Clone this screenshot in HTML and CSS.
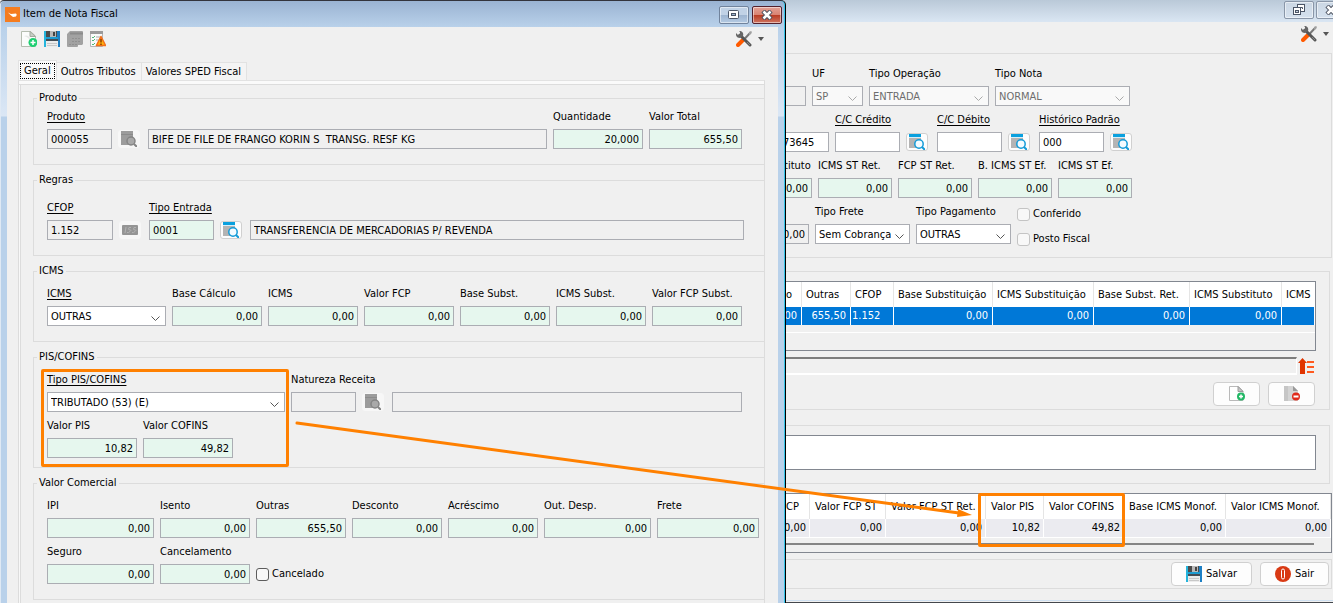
FILE: index.html
```html
<!DOCTYPE html>
<html lang="pt-BR">
<head>
    <meta charset="UTF-8">
    <meta name="viewport" content="width=device-width, initial-scale=1.0">
    <title>Item de Nota Fiscal</title>
    <link rel="stylesheet" href="styles.css">
</head>
<body>
    <svg class="sprite" aria-hidden="true">
        <symbol id="i-new" viewBox="0 0 16 16">
            <path d="M.5.5h9l5 4.500v10.500H.5z" fill="#fbfcfb" stroke="#b5bdb0"/>
            <path d="M9 .5v5h5.500z" fill="#c9cec6" stroke="#a2a99e"/>
            <path d="M3 5c2-1 4-1 6 2v3c-1-3-3-4-6-5z" fill="#e6e8e6"/>
            <circle cx="12" cy="11.500" r="4.500" fill="#1fcf72"/>
            <path d="M12 9v5M9.500 11.500h5" stroke="#fff" stroke-width="1.500"/>
        </symbol>
        <symbol id="i-add" viewBox="0 0 16 16">
            <path d="M.5.5h9l4.500 4.500v9.500H.5z" fill="#fff" stroke="#b9b9b9"/>
            <path d="M9 .5v5h5z" fill="#c4c4c4" stroke="#9a9a9a"/>
            <circle cx="12" cy="10.500" r="4" fill="#23b866"/>
            <path d="M12 8.500v4M10 10.500h4" stroke="#fff" stroke-width="1.500"/>
        </symbol>
        <symbol id="i-remove" viewBox="0 0 16 16">
            <path d="M0 0h9l5 5v10H0z" fill="#c6c6c6"/>
            <path d="M4 0h5l5 5v10H4z" fill="#d4d4d4"/>
            <path d="M9 0v5h5z" fill="#999"/>
            <circle cx="12" cy="10.500" r="4" fill="#e02a1b"/>
            <path d="M9.500 10.500h5" stroke="#fff" stroke-width="2"/>
        </symbol>
        <symbol id="i-save" viewBox="0 0 16 16">
            <path d="M0 0h16v16H0z" fill="#1d7fc4"/>
            <path d="M0 0h2v16H0z" fill="#25b5dc"/>
            <path d="M2 0h11v6H2z" fill="#4c4c4c"/>
            <path d="M6 0h6v6H6z" fill="#b9b9b9"/>
            <path d="M9 1h2v4H9z" fill="#444"/>
            <path d="M2 6h12v2H2z" fill="#1d9bd0"/>
            <path d="M2 8h12v2H2z" fill="#454d55"/>
            <path d="M2 10h12v6H2z" fill="#ececec"/>
            <path d="M3 12.500h10M3 14.500h10" stroke="#c8c8c8"/>
        </symbol>
        <symbol id="i-calc" viewBox="0 0 16 16">
            <path d="M3 0h12q1 0 1 1v12l-1 1h-4v1q0 1-1 1H1q-1 0-1-1V3z" fill="#a2a2a2"/>
            <path d="M3 2.500h13" stroke="#8b8b8b" stroke-width="2"/>
            <path d="M5 7.500h9M5 10.500h9M2 13.500h8" stroke="#909090" stroke-dasharray="2 1"/>
        </symbol>
        <symbol id="i-warn" viewBox="0 0 16 16">
            <path d="M.5.5h12v15H.5z" fill="#fafafa" stroke="#b5b5b5"/>
            <path d="M0 1.500h13" stroke="#9b9b9b" stroke-width="3"/>
            <path d="M2 6l1 1 2-2M2 9l1 1 2-2M2 13l1 1 2-2" stroke="#4fb878" fill="none"/>
            <path d="M6 6h5M6 9h3" stroke="#aaa"/>
            <path d="M11 5.500l4.600 9H6.400z" fill="#ffb30e" stroke="#f4701a" stroke-width="1.500" stroke-linejoin="round"/>
            <path d="M11 8v3.500M11 12.500v1.500" stroke="#8c3b00" stroke-width="1.500"/>
        </symbol>
        <symbol id="i-tools" viewBox="0 0 16 16">
            <path d="M14.500 1.500L8 8.500" stroke="#777" stroke-width="2"/>
            <path d="M13 1l2-1 1 1-1 2-2 1z" fill="#a0a0a0"/>
            <path d="M7 9l-5 5" stroke="#ff5a00" stroke-width="4" stroke-linecap="round"/>
            <path d="M4 4l10 10" stroke="#565656" stroke-width="3" stroke-linecap="round"/>
            <path d="M0 2l2 2 2-1V1L3 0c3-.5 5 2 4 5L4 7C1 7-.5 5 0 2z" fill="#666"/>
            <path d="M11 11l3 3" stroke="#888"/>
        </symbol>
        <symbol id="i-search" viewBox="0 0 16 16">
            <path d="M0 0h12v14H0z" fill="#b4b4b4"/>
            <path d="M0 0h12v3H0z" fill="#0aa0de"/>
            <path d="M0 3.500h12" stroke="#d9eef7"/>
            <circle cx="10" cy="10" r="4.200" fill="#f3fbff" stroke="#139bd8" stroke-width="1.500"/>
            <path d="M13 13l3 3" stroke="#139bd8" stroke-width="2"/>
        </symbol>
        <symbol id="i-search-off" viewBox="0 0 16 16">
            <path d="M0 0h12v14H0z" fill="#9c9c9c"/>
            <path d="M0 3.500h12" stroke="#8b8b8b"/>
            <circle cx="10" cy="10" r="4" fill="#a9a9a9" stroke="#858585" stroke-width="1.500"/>
            <path d="M13 13l3 3" stroke="#858585" stroke-width="2"/>
        </symbol>
        <symbol id="i-iss" viewBox="0 0 16 10">
            <rect width="16" height="10" rx="1" fill="#959595"/>
            <path d="M4 2L3 8M9 2.500H7Q5.500 5 8 5T6.500 7.500H5M14 2.500h-2Q10.500 5 13 5t-1.500 2.500H10" fill="none" stroke="#b3b3b3"/>
        </symbol>
        <symbol id="i-up" viewBox="0 0 17 16">
            <path d="M4.500 0L9 5H7v11H2V5H0z" fill="#e03400"/>
            <path d="M9 4h7M9 9h7M9 14h7" stroke="#ff5a1f" stroke-width="2"/>
        </symbol>
        <symbol id="i-exit" viewBox="0 0 16 16">
            <circle cx="8" cy="8" r="8" fill="#d93a14"/>
            <rect x="6.500" y="3" width="3" height="10" rx="1.500" fill="#d93a14" stroke="#fff"/>
        </symbol>
        <symbol id="i-max" viewBox="0 0 12 10">
            <rect x=".5" y=".5" width="10" height="8" rx="1" fill="#fff" stroke="#4b5566"/>
            <rect x="3.500" y="3.500" width="4" height="2" fill="#9db4cf" stroke="#4b5566"/>
        </symbol>
        <symbol id="i-restore" viewBox="0 0 12 12">
            <rect x="4.500" y=".5" width="7" height="7" fill="#fff" stroke="#4b5566"/>
            <path d="M7 3.500h2.500V5" fill="none" stroke="#4b5566"/>
            <rect x=".5" y="3.500" width="7" height="7" fill="#fff" stroke="#4b5566"/>
            <rect x="2.500" y="6.500" width="3" height="2" fill="#cbd6e4" stroke="#4b5566"/>
        </symbol>
        <symbol id="i-close" viewBox="0 0 12 10">
            <path d="M2 1l8 8M10 1L2 9" stroke="#4c5260" stroke-width="4.500"/>
            <path d="M2.500 1.500l7 7M9.500 1.500l-7 7" stroke="#fff" stroke-width="2.500"/>
        </symbol>
        <symbol id="i-logo" viewBox="0 0 15 15">
            <rect width="15" height="15" fill="#f57c1f"/>
            <path d="M3 5.500l3 1.500 5-.5q1.500 1 0 3l-3 .5-2.500-2z" fill="#fff"/>
        </symbol>
    </svg>

    <div class="desktop">
        <main class="invoice">
            <header class="invoice-title">
                <button class="win-btn" type="button" aria-label="Restaurar"><svg width="12" height="12"><use href="#i-restore"/></svg></button>
                <button class="win-btn" type="button" aria-label="Fechar"><svg width="12" height="10"><use href="#i-close"/></svg></button>
            </header>
            <div class="invoice-tools">
                <button class="tool menu" type="button" aria-label="Ferramentas"><svg width="16" height="16"><use href="#i-tools"/></svg></button>
            </div>

            <section class="panel header-panel">
                <div class="row">
                    <div class="field w-46"><input class="off" aria-label="Cidade" readonly></div>
                    <div class="field w-51"><label for="uf">UF</label><select id="uf" disabled><option>SP</option></select></div>
                    <div class="field w-120"><label for="operacao">Tipo Operação</label><select id="operacao" disabled><option>ENTRADA</option></select></div>
                    <div class="field w-135"><label for="tipo-nota">Tipo Nota</label><select id="tipo-nota" disabled><option>NORMAL</option></select></div>
                </div>
                <div class="row">
                    <div class="field w-69"><input value="00173645" aria-label="Número"></div>
                    <div class="field w-65"><label class="link" for="credito">C/C Crédito</label><input id="credito"></div>
                    <button class="icon-btn" type="button" aria-label="Buscar crédito"><svg width="16" height="16"><use href="#i-search"/></svg></button>
                    <div class="field w-65"><label class="link" for="debito">C/C Débito</label><input id="debito"></div>
                    <button class="icon-btn" type="button" aria-label="Buscar débito"><svg width="16" height="16"><use href="#i-search"/></svg></button>
                    <div class="field w-65"><label class="link" for="historico">Histórico Padrão</label><input id="historico" value="000"></div>
                    <button class="icon-btn" type="button" aria-label="Buscar histórico"><svg width="16" height="16"><use href="#i-search"/></svg></button>
                </div>
                <div class="row">
                    <div class="field w-52"><label for="substituto">Substituto</label><input id="substituto" class="num" value="0,00"></div>
                    <div class="field w-74"><label for="st-ret">ICMS ST Ret.</label><input id="st-ret" class="num" value="0,00"></div>
                    <div class="field w-74"><label for="fcp-ret">FCP ST Ret.</label><input id="fcp-ret" class="num" value="0,00"></div>
                    <div class="field w-74"><label for="b-ef">B. ICMS ST Ef.</label><input id="b-ef" class="num" value="0,00"></div>
                    <div class="field w-74"><label for="st-ef">ICMS ST Ef.</label><input id="st-ef" class="num" value="0,00"></div>
                </div>
                <div class="row">
                    <div class="field w-49"><input class="num off" aria-label="Total" value="0,00" readonly></div>
                    <div class="field w-95"><label for="tipo-frete">Tipo Frete</label><select id="tipo-frete"><option>Sem Cobrança</option></select></div>
                    <div class="field w-95"><label for="pagamento">Tipo Pagamento</label><select id="pagamento"><option>OUTRAS</option></select></div>
                    <div class="checks">
                        <label class="check muted"><input type="checkbox"> Conferido</label>
                        <label class="check muted"><input type="checkbox"> Posto Fiscal</label>
                    </div>
                </div>
            </section>

            <section class="panel items-panel">
                <div class="table-box items-box">
                    <table class="items">
                        <colgroup><col class="w-42"><col class="w-49"><col class="w-43"><col class="w-99"><col class="w-101"><col class="w-96"><col class="w-92"><col></colgroup>
                        <thead>
                            <tr><th>Isento</th><th>Outras</th><th>CFOP</th><th>Base Substituição</th><th>ICMS Substituição</th><th>Base Subst. Ret.</th><th>ICMS Substituto</th><th>ICMS</th></tr>
                        </thead>
                        <tbody>
                            <tr><td>0,00</td><td>655,50</td><td class="left">1.152</td><td>0,00</td><td>0,00</td><td>0,00</td><td>0,00</td><td></td></tr>
                        </tbody>
                    </table>
                </div>
                <div class="status">
                    <div class="status-bar"></div>
                    <button class="tool" type="button" aria-label="Ordenar"><svg width="17" height="16"><use href="#i-up"/></svg></button>
                </div>
                <div class="actions">
                    <button class="btn w-47" type="button" aria-label="Novo item"><svg width="16" height="16"><use href="#i-add"/></svg></button>
                    <button class="btn w-47" type="button" aria-label="Remover item"><svg width="16" height="16"><use href="#i-remove"/></svg></button>
                </div>
            </section>

            <section class="panel notes-panel">
                <textarea aria-label="Observação"></textarea>
            </section>

            <div class="table-box totals-box">
                <table class="totals">
                    <colgroup><col class="w-50"><col class="w-76"><col class="w-100"><col class="w-58"><col class="w-80"><col class="w-102"><col></colgroup>
                    <thead>
                        <tr><th>FCP</th><th>Valor FCP ST</th><th>Valor FCP ST Ret.</th><th>Valor PIS</th><th>Valor COFINS</th><th>Base ICMS Monof.</th><th>Valor ICMS Monof.</th></tr>
                    </thead>
                    <tbody>
                        <tr><td>0,00</td><td>0,00</td><td>0,00</td><td>10,82</td><td>49,82</td><td>0,00</td><td>0,00</td></tr>
                    </tbody>
                </table>
                <div class="scroll"></div>
            </div>

            <section class="panel footer-panel">
                <button class="btn w-81" type="button"><svg width="16" height="16"><use href="#i-save"/></svg>Salvar</button>
                <button class="btn w-69" type="button"><svg width="16" height="16"><use href="#i-exit"/></svg>Sair</button>
            </section>
            <div class="invoice-edge"></div>
        </main>

        <section class="dialog">
            <header class="dialog-title">
                <svg width="15" height="15"><use href="#i-logo"/></svg>
                <h1>Item de Nota Fiscal</h1>
                <button class="win-btn" type="button" aria-label="Maximizar"><svg width="12" height="10"><use href="#i-max"/></svg></button>
                <button class="win-btn close" type="button" aria-label="Fechar"><svg width="12" height="10"><use href="#i-close"/></svg></button>
            </header>
            <div class="dialog-body">
                <div class="toolbar">
                    <button class="tool" type="button" aria-label="Novo"><svg width="16" height="16"><use href="#i-new"/></svg></button>
                    <button class="tool" type="button" aria-label="Salvar"><svg width="16" height="16"><use href="#i-save"/></svg></button>
                    <button class="tool" type="button" aria-label="Calcular" disabled><svg width="16" height="16"><use href="#i-calc"/></svg></button>
                    <button class="tool" type="button" aria-label="Pendências"><svg width="16" height="16"><use href="#i-warn"/></svg></button>
                    <button class="tool menu" type="button" aria-label="Ferramentas"><svg width="16" height="16"><use href="#i-tools"/></svg></button>
                </div>
                <nav class="tabs">
                    <button class="tab active" type="button"><span>Geral</span></button>
                    <button class="tab" type="button">Outros Tributos</button>
                    <button class="tab" type="button">Valores SPED Fiscal</button>
                </nav>
                <form class="tab-panel">
                    <fieldset class="produto">
                        <legend>Produto</legend>
                        <div class="row">
                            <div class="field w-65"><label class="link" for="produto">Produto</label><input id="produto" class="off" value="000055" readonly></div>
                            <button class="icon-btn off" type="button" aria-label="Buscar produto" disabled><svg width="16" height="16"><use href="#i-search-off"/></svg></button>
                            <div class="field grow"><input class="off" aria-label="Descrição do produto" value="BIFE DE FILE DE FRANGO KORIN S  TRANSG. RESF KG" readonly></div>
                            <div class="field w-90"><label for="quantidade">Quantidade</label><input id="quantidade" class="num" value="20,000"></div>
                            <div class="field w-93"><label for="valor-total">Valor Total</label><input id="valor-total" class="num" value="655,50"></div>
                        </div>
                    </fieldset>
                    <fieldset class="regras">
                        <legend>Regras</legend>
                        <div class="row">
                            <div class="field w-66"><label class="link" for="cfop">CFOP</label><input id="cfop" class="off" value="1.152" readonly></div>
                            <button class="icon-btn off" type="button" aria-label="ISS" disabled><svg width="16" height="10"><use href="#i-iss"/></svg></button>
                            <div class="field w-65"><label class="link" for="entrada">Tipo Entrada</label><input id="entrada" class="green" value="0001"></div>
                            <button class="icon-btn" type="button" aria-label="Buscar tipo de entrada"><svg width="16" height="16"><use href="#i-search"/></svg></button>
                            <div class="field grow"><input class="off" aria-label="Descrição do tipo de entrada" value="TRANSFERENCIA DE MERCADORIAS P/ REVENDA" readonly></div>
                        </div>
                    </fieldset>
                    <fieldset>
                        <legend>ICMS</legend>
                        <div class="row">
                            <div class="field w-119"><label class="link" for="icms-tipo">ICMS</label><select id="icms-tipo"><option>OUTRAS</option></select></div>
                            <div class="field w-90"><label for="base">Base Cálculo</label><input id="base" class="num" value="0,00"></div>
                            <div class="field w-90"><label for="icms">ICMS</label><input id="icms" class="num" value="0,00"></div>
                            <div class="field w-90"><label for="fcp">Valor FCP</label><input id="fcp" class="num" value="0,00"></div>
                            <div class="field w-90"><label for="base-subst">Base Subst.</label><input id="base-subst" class="num" value="0,00"></div>
                            <div class="field w-90"><label for="icms-subst">ICMS Subst.</label><input id="icms-subst" class="num" value="0,00"></div>
                            <div class="field w-90"><label for="fcp-subst">Valor FCP Subst.</label><input id="fcp-subst" class="num" value="0,00"></div>
                        </div>
                    </fieldset>
                    <fieldset class="pis-cofins">
                        <legend>PIS/COFINS</legend>
                        <div class="row">
                            <div class="field w-238"><label class="link" for="pis-tipo">Tipo PIS/COFINS</label><select id="pis-tipo"><option>TRIBUTADO (53) (E)</option></select></div>
                            <div class="field w-65"><label for="natureza">Natureza Receita</label><input id="natureza" class="off" readonly></div>
                            <button class="icon-btn off" type="button" aria-label="Buscar natureza" disabled><svg width="16" height="16"><use href="#i-search-off"/></svg></button>
                            <div class="field grow"><input class="off" aria-label="Descrição da natureza" readonly></div>
                        </div>
                        <div class="row">
                            <div class="field w-90"><label for="pis">Valor PIS</label><input id="pis" class="num" value="10,82"></div>
                            <div class="field w-90"><label for="cofins">Valor COFINS</label><input id="cofins" class="num" value="49,82"></div>
                        </div>
                    </fieldset>
                    <fieldset>
                        <legend>Valor Comercial</legend>
                        <div class="row">
                            <div class="field w-107"><label for="ipi">IPI</label><input id="ipi" class="num" value="0,00"></div>
                            <div class="field w-90"><label for="isento">Isento</label><input id="isento" class="num" value="0,00"></div>
                            <div class="field w-90"><label for="outras">Outras</label><input id="outras" class="num" value="655,50"></div>
                            <div class="field w-90"><label for="desconto">Desconto</label><input id="desconto" class="num" value="0,00"></div>
                            <div class="field w-90"><label for="acrescimo">Acréscimo</label><input id="acrescimo" class="num" value="0,00"></div>
                            <div class="field w-107"><label for="despesas">Out. Desp.</label><input id="despesas" class="num" value="0,00"></div>
                            <div class="field w-102"><label for="frete">Frete</label><input id="frete" class="num" value="0,00"></div>
                        </div>
                        <div class="row">
                            <div class="field w-107"><label for="seguro">Seguro</label><input id="seguro" class="num" value="0,00"></div>
                            <div class="field w-90"><label for="cancelamento">Cancelamento</label><input id="cancelamento" class="num" value="0,00"></div>
                            <label class="check"><input type="checkbox"> Cancelado</label>
                        </div>
                    </fieldset>
                </form>
            </div>
        </section>

        <div class="mark mark-from"></div>
        <div class="mark mark-to"></div>
        <svg class="arrow" viewBox="0 0 680 100" preserveAspectRatio="none" aria-hidden="true">
            <path d="M2 6L664 96" stroke="#ff8000" stroke-width="3" stroke-linecap="round"/>
            <path d="M677 98L663 92L662 100z" fill="#ff8000"/>
        </svg>
    </div>
</body>
</html>
```
FILE: styles.css
```css
* {
    box-sizing: border-box;
}
body {
    margin: 0;
    background: #f0f0f0;
    color: #000;
    font: 11px/14px Tahoma, "DejaVu Sans Condensed", "Noto Sans", sans-serif;
}
button, input, select, textarea {
    margin: 0;
    font: inherit;
    color: inherit;
}
svg {
    display: block;
    flex: none;
}
.sprite {
    position: absolute;
    width: 0;
    height: 0;
}
.desktop {
    position: relative;
    height: 100vh;
    overflow: hidden;
}

/* invoice window, partly covered by the dialog */
.invoice {
    height: 100%;
    display: flex;
    flex-direction: column;
    padding-left: calc(100% - 573px);
}
.invoice-title {
    flex: none;
    display: flex;
    justify-content: flex-end;
    gap: 2px;
    height: 22px;
    padding-top: 1px;
    margin-right: -13px;
    background: linear-gradient(#bac9d8, #dae6f3);
}
.invoice-tools {
    flex: none;
    display: flex;
    height: 31px;
    padding: 4px 4px 0 0;
}
.panel {
    flex: none;
    margin-right: 3px;
    border: 1px solid #dcdcdc;
    border-left: 0;
}
.header-panel {
    margin-right: 1px;
    padding: 13px 0;
}
.header-panel .icon-btn {
    margin-right: 3px;
}
.items-panel {
    margin-top: 13px;
    padding: 9px 13px 3px 0;
}
.notes-panel {
    margin-top: 15px;
    padding: 9px 13px 13px 0;
}
.footer-panel {
    display: flex;
    justify-content: flex-end;
    gap: 8px;
    margin: 6px 1px 0 0;
    padding: 2px;
}
.invoice-edge {
    margin-top: auto;
    height: 3px;
    border-top: 1px solid #cfe0f1;
    border-bottom: 1px solid #44474c;
}

/* rows and fields */
.row {
    display: flex;
    align-items: flex-end;
    gap: 6px;
}
.row + .row {
    margin-top: 7px;
}
.field {
    flex: none;
    display: flex;
    flex-direction: column;
    gap: 5px;
}
.field.grow {
    flex: 1;
}
.field label {
    height: 14px;
    white-space: nowrap;
}
.link {
    text-decoration: underline;
    text-underline-offset: 2px;
}
.field input, .field select {
    width: 100%;
    height: 20px;
    padding: 0 3px;
    border: 1px solid #abadb3;
    border-radius: 0;
    background-color: #fff;
    white-space: pre;
    outline: 0;
}
.field input.num {
    text-align: right;
    background-color: #e6f7ee;
}
.field input.green {
    background-color: #e6f7ee;
}
.field input.off {
    background-color: #f0f0f0;
}
.field select {
    appearance: none;
    padding: 1px 18px 0 3px;
    background: #fff url("data:image/svg+xml,%3Csvg xmlns='http://www.w3.org/2000/svg' width='9' height='6'%3E%3Cpath d='M.5.5l4 4 4-4' fill='none' stroke='%23555'/%3E%3C/svg%3E") no-repeat right 5px top 9px;
}
.field select:disabled {
    background-color: #f9f9f9;
    background-image: url("data:image/svg+xml,%3Csvg xmlns='http://www.w3.org/2000/svg' width='9' height='6'%3E%3Cpath d='M.5.5l4 4 4-4' fill='none' stroke='%23aaa'/%3E%3C/svg%3E");
    color: #6d6d6d;
    opacity: 1;
}
.icon-btn {
    flex: none;
    display: flex;
    align-items: center;
    justify-content: center;
    width: 22px;
    height: 18px;
    margin: 0 2px 1px 0;
    padding: 0;
    border: 1px solid #d0d0d0;
    border-radius: 3px;
    background: #fdfdfd;
}
.icon-btn.off {
    border-color: #f7f7f7;
    background: #f7f7f7;
}
.checks {
    display: flex;
    flex-direction: column;
    gap: 11px;
    margin-bottom: -2px;
}
.check {
    display: flex;
    align-items: center;
    gap: 3px;
    height: 14px;
}
.row > .check {
    margin-bottom: 3px;
}
.check input {
    appearance: none;
    width: 13px;
    height: 13px;
    border: 1px solid #5c5c5c;
    border-radius: 3px;
    background: #f8f8f8;
}
.check.muted input {
    border-color: #c4c4c4;
}

/* tables */
.table-box {
    flex: none;
    overflow: hidden;
    border: 1px solid #828790;
    border-left: 0;
}
.items-box {
    height: 70px;
}
.items-box::after {
    content: "";
    display: block;
    margin-top: 7px;
    border-top: 1px solid #fff;
}
.totals-box {
    height: 60px;
    margin: 9px 1px 0 0;
}
table {
    width: 100%;
    table-layout: fixed;
    border-collapse: separate;
    border-spacing: 0;
    background: #f0f0f0;
}
th, td {
    padding: 0 4px;
    overflow: hidden;
    white-space: nowrap;
    font-weight: normal;
    text-align: right;
    border-right: 1px solid #fff;
}
th {
    height: 25px;
    text-align: left;
    background: #fff;
    border-right-color: #e5e5e5;
}
td {
    height: 18px;
}
td.left {
    padding: 0 1px;
    text-align: left;
}
.items td {
    background: #0078d7;
    color: #fff;
}
.items th:first-child {
    text-align: right;
    padding: 0 9px 0 0;
}
.items th:last-child {
    padding-right: 0;
    border-right: 0;
}
.totals {
    border-bottom: 1px solid #fff;
}
.totals th {
    padding: 1px 0 0 5px;
}
.totals td {
    background: #ebebf0;
    padding-right: 3px;
}
.totals th:first-child {
    text-align: right;
    padding-right: 10px;
}
.scroll {
    height: 2px;
    margin: 5px 17px 0 0;
    background: #858585;
}
.status {
    display: flex;
    align-items: center;
    gap: 1px;
    height: 18px;
    margin: 6px 1px 0 0;
}
.status-bar {
    flex: 1;
    height: 18px;
    border-top: 2px solid #7d7d7d;
    border-right: 1px solid #fff;
    border-bottom: 2px solid #fff;
}
.actions {
    display: flex;
    justify-content: flex-end;
    gap: 8px;
    margin: 7px 1px 0 0;
}
textarea {
    display: block;
    width: 100%;
    height: 35px;
    border: 1px solid #828790;
    border-left: 0;
    background: #fff;
    resize: none;
}

/* buttons */
.btn {
    display: flex;
    align-items: center;
    justify-content: center;
    gap: 4px;
    height: 24px;
    padding: 0;
    border: 1px solid #d0d0d0;
    border-radius: 4px;
    background: #fdfdfd;
}
.tool {
    display: flex;
    align-items: center;
    height: 16px;
    padding: 0;
    border: 0;
    background: none;
}
.menu {
    gap: 6px;
    margin-left: auto;
}
.menu::after {
    content: "";
    border: 3px solid transparent;
    border-top: 4px solid #555;
    border-bottom: 0;
}
.win-btn {
    flex: none;
    display: flex;
    align-items: center;
    justify-content: center;
    width: 30px;
    height: 18px;
    padding: 0;
    border: 1px solid #71839c;
    border-radius: 2px;
    box-shadow: inset 0 0 0 1px rgba(255, 255, 255, 0.5);
    background: linear-gradient(#c1d2e6 50%, #9db4d0 50%, #b5cbe3);
}
.invoice .win-btn {
    background: linear-gradient(#cbd7e4, #d5e1ee);
    border-color: #8996a8;
}
.win-btn.close {
    border-color: #54202c;
    background: linear-gradient(#e3a195, #d98271 50%, #b83a22 50%, #cf7460);
}

/* dialog window */
.dialog {
    position: absolute;
    top: 0;
    left: 0;
    display: flex;
    flex-direction: column;
    width: calc(100% - 547px);
    height: 100%;
    padding: 0 6px 0 7px;
    border-top: 1px solid #33343c;
    border-right: 1px solid #000;
    border-radius: 4px 5px 0 0;
    box-shadow: inset -1px 0 #35c4e8, inset 1px 0 #dfe9f4;
    background: linear-gradient(#9ab3d2, #b9d1ea 26px, #dbe7f5 115px, #b9d1ea 116px);
}
.dialog-title {
    flex: none;
    display: flex;
    align-items: center;
    gap: 3px;
    height: 26px;
    margin: 0 -3px 0 -2px;
}
.dialog-title .win-btn {
    margin-top: 2px;
}
.dialog-title h1 {
    flex: 1;
    margin: 0;
    font-size: 11px;
    font-weight: normal;
}
.dialog-body {
    flex: 1;
    min-height: 0;
    margin-right: 1px;
    overflow: hidden;
    background: #f0f0f0;
}
.toolbar {
    display: flex;
    gap: 7px;
    padding: 4px 14px 13px;
}
.tabs {
    display: flex;
    align-items: flex-end;
    height: 20px;
    padding-left: 11px;
}
.tab {
    height: 18px;
    padding: 0 5px 0 4px;
    border: 1px solid #e2e2e2;
    border-left: 0;
    border-bottom: 0;
    background: #f4f4f4;
}
.tab.active {
    height: 20px;
    padding: 0 1px;
    border-left: 1px solid #e2e2e2;
    background: #fafafa;
}
.tab.active span {
    display: block;
    padding: 0 3px;
    border: 1px dotted #000;
}
.tab-panel {
    margin: 0 13px 0 11px;
    padding: 6px 0 20px 14px;
    border: 1px solid #dcdcdc;
    border-top-color: #e2e2e2;
    box-shadow: inset 0 3px #fafafa, inset 0 4px #dcdcdc, inset 1px 0 #f8f8f8, inset 2px 0 #dcdcdc;
}
fieldset {
    min-width: 0;
    margin: 4px 0 0;
    padding: 9px 22px 15px 13px;
    border: 1px solid #dcdcdc;
    border-right: 0;
}
fieldset + fieldset {
    margin-top: 8px;
}
fieldset.produto {
    padding-top: 5px;
}
fieldset.regras {
    padding-top: 14px;
    padding-right: 20px;
}
fieldset.pis-cofins {
    padding-bottom: 9px;
}
legend {
    height: 14px;
    margin-left: -10px;
    padding: 0 2px;
}

/* highlights over both windows */
.mark {
    position: absolute;
    border: 3px solid #ff8000;
    border-radius: 2px;
}
.mark-from {
    top: 369px;
    left: 41px;
    width: 248px;
    height: 98px;
}
.mark-to {
    top: 493px;
    right: 208px;
    width: 147px;
    height: 54px;
}
.arrow {
    position: absolute;
    top: 417px;
    left: 295px;
    width: calc(100% - 653px);
    height: 100px;
}

/* widths */
.w-42 { width: 42px; }
.w-43 { width: 43px; }
.w-46 { width: 46px; }
.w-47 { width: 47px; }
.w-49 { width: 49px; }
.w-50 { width: 50px; }
.w-51 { width: 51px; }
.w-52 { width: 52px; }
.w-58 { width: 58px; }
.w-65 { width: 65px; }
.w-66 { width: 66px; }
.w-69 { width: 69px; }
.w-74 { width: 74px; }
.w-76 { width: 76px; }
.w-80 { width: 80px; }
.w-81 { width: 81px; }
.w-90 { width: 90px; }
.w-92 { width: 92px; }
.w-93 { width: 93px; }
.w-95 { width: 95px; }
.w-96 { width: 96px; }
.w-99 { width: 99px; }
.w-100 { width: 100px; }
.w-101 { width: 101px; }
.w-102 { width: 102px; }
.w-107 { width: 107px; }
.w-119 { width: 119px; }
.w-120 { width: 120px; }
.w-135 { width: 135px; }
.w-238 { width: 238px; }
```
